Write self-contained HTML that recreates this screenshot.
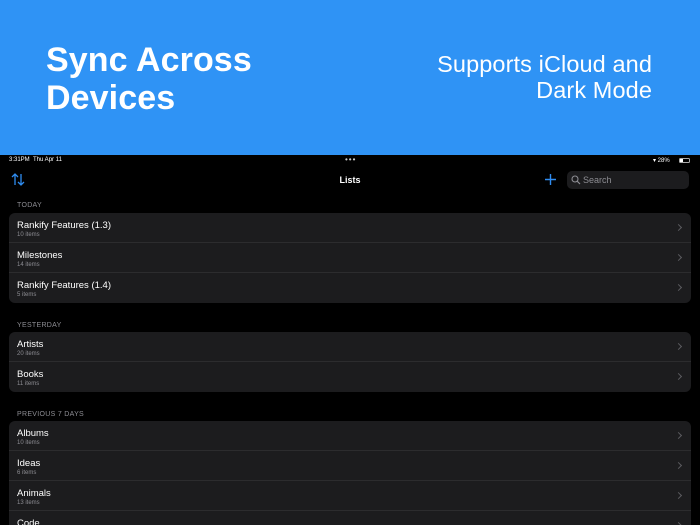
<!DOCTYPE html>
<html><head><style>
*{margin:0;padding:0;box-sizing:border-box}
html,body{width:700px;height:525px;overflow:hidden}
body{background:#000;font-family:"Liberation Sans",sans-serif;position:relative}
.top{position:absolute;left:0;top:0;width:700px;height:155px;background:#2f93f5;color:#fff}
.h1{position:absolute;left:46px;top:41px;font-size:34px;font-weight:bold;line-height:38px;letter-spacing:0.1px}
.h2{position:absolute;right:48px;top:51px;font-size:23.5px;line-height:26px;text-align:right;letter-spacing:0.1px}
.abs{position:absolute}
.sec{position:absolute;left:17px;font-size:7px;color:#8d8d93;letter-spacing:.3px}
.card{position:absolute;left:9px;width:682px;background:#1c1c1e;border-radius:6px;overflow:hidden}
.row{height:30px;position:relative;border-bottom:1px solid #2c2c2e}
.row:last-child{border-bottom:none}
.t{position:absolute;left:8px;top:6.5px;font-size:9.5px;color:#fff}
.s{position:absolute;left:8px;top:19px;font-size:6px;color:#8d8d93}
.chev{position:absolute;right:10px;top:12px;width:5px;height:5px;border-right:1.2px solid #5a5a5f;border-top:1.2px solid #5a5a5f;transform:rotate(45deg)}
</style></head><body>
<div class="top"><div class="h1">Sync Across<br>Devices</div><div class="h2">Supports iCloud and<br>Dark Mode</div></div>
<div class="abs" style="left:9px;top:157px;font-size:6px;color:#fff">3:31PM&nbsp;&nbsp;Thu Apr 11</div>
<div class="abs" style="left:345px;top:155px;font-size:8px;color:#ccc;letter-spacing:1px">•••</div>
<div class="abs" style="left:653px;top:157px;font-size:6px;color:#fff">▾ 28%</div>
<div class="abs" style="left:679px;top:158px;width:11px;height:5px;border:1px solid #aaa;border-radius:1.5px"><div style="width:3px;height:3px;background:#fff"></div></div>
<svg class="abs" style="left:11px;top:173px" width="14" height="13" viewBox="0 0 14 13"><path d="M4 12V1M1 4l3-3 3 3M10 1v11M7 9l3 3 3-3" stroke="#2f8cf0" stroke-width="1.3" fill="none"/></svg>
<div class="abs" style="left:0;width:700px;text-align:center;top:175px;font-size:9px;color:#fff;font-weight:bold">Lists</div>
<svg class="abs" style="left:545px;top:174px" width="11" height="11" viewBox="0 0 11 11"><path d="M5.5 0v11M0 5.5h11" stroke="#2f8cf0" stroke-width="1.4"/></svg>
<div class="abs" style="left:567px;top:171px;width:122px;height:18px;background:#1c1c1e;border-radius:5px">
<svg class="abs" style="left:4px;top:4px" width="10" height="10" viewBox="0 0 10 10"><circle cx="4" cy="4" r="3" stroke="#8d8d93" stroke-width="1.1" fill="none"/><path d="M6.2 6.2L9 9" stroke="#8d8d93" stroke-width="1.2"/></svg>
<span class="abs" style="left:16px;top:4px;font-size:9px;color:#8d8d93">Search</span></div>
<div class="sec" style="top:202px">TODAY</div>
<div class="card" style="top:213px">
<div class="row"><div class="t">Rankify Features (1.3)</div><div class="s">10 items</div><div class="chev"></div></div>
<div class="row"><div class="t">Milestones</div><div class="s">14 items</div><div class="chev"></div></div>
<div class="row"><div class="t">Rankify Features (1.4)</div><div class="s">5 items</div><div class="chev"></div></div>
</div>
<div class="sec" style="top:322px">YESTERDAY</div>
<div class="card" style="top:332px">
<div class="row"><div class="t">Artists</div><div class="s">20 items</div><div class="chev"></div></div>
<div class="row"><div class="t">Books</div><div class="s">11 items</div><div class="chev"></div></div>
</div>
<div class="sec" style="top:411px">PREVIOUS 7 DAYS</div>
<div class="card" style="top:421px">
<div class="row"><div class="t">Albums</div><div class="s">10 items</div><div class="chev"></div></div>
<div class="row"><div class="t">Ideas</div><div class="s">6 items</div><div class="chev"></div></div>
<div class="row"><div class="t">Animals</div><div class="s">13 items</div><div class="chev"></div></div>
<div class="row"><div class="t">Code</div><div class="s">8 items</div><div class="chev"></div></div>
</div>
</body></html>
